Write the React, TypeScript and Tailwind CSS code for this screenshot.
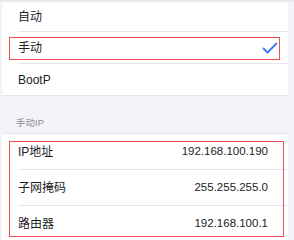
const font = "font-['Liberation_Sans','Noto_Sans_CJK_SC',sans-serif]";

const Row = ({
  label,
  value,
  h,
  line,
  check,
}: {
  label: string;
  value?: string;
  h: string;
  line?: boolean;
  check?: boolean;
}) => (
  <div className={`flex flex-col ${h}`}>
    <div className="flex flex-1 items-center justify-between pl-[16px] pr-[20px]">
      <span className="text-[12px] text-[#1c1c1e]">{label}</span>
      {value && <span className="text-[11.5px] text-[#1c1c1e]">{value}</span>}
      {check && (
        <svg width="16" height="12" viewBox="0 0 16 12" className="mr-[-10px]">
          <path
            d="M1.5 6.5 L5.5 10.5 L14.5 1.5"
            fill="none"
            stroke="#3a7af5"
            strokeWidth="1.8"
            strokeLinecap="round"
            strokeLinejoin="round"
          />
        </svg>
      )}
    </div>
    {line && <div className="ml-[16px] h-px bg-[#e6e6ea]" />}
  </div>
);

export default function App() {
  return (
    <div className={`relative h-[240px] w-[294px] overflow-hidden bg-[#f4f4f8] ${font}`}>
      <div className="h-[2px] bg-[#e9e9ee]" />
      <div className="mx-[2px] w-[286px] bg-white">
        <Row label="自动" h="h-[30px]" line />
        <Row label="手动" h="h-[32px]" line check />
        <Row label="BootP" h="h-[31px]" />
      </div>
      <div className="ml-[2px] h-px w-[286px] bg-[#e6e6ea]" />
      <div className="flex h-[37px] items-end pb-[3px] pl-[16px] text-[9.5px] text-[#8e8e93]">
        手动IP
      </div>
      <div className="ml-[2px] h-px w-[286px] bg-[#e6e6ea]" />
      <div className="mx-[2px] w-[286px] bg-white">
        <Row label="IP地址" value="192.168.100.190" h="h-[36px]" line />
        <Row label="子网掩码" value="255.255.255.0" h="h-[36px]" line />
        <Row label="路由器" value="192.168.100.1" h="h-[36px]" />
      </div>
      <div className="absolute left-[9px] top-[37px] h-[23px] w-[271px] border-[1.5px] border-[#ec4f52]" />
      <div className="absolute left-[9px] top-[141px] h-[96px] w-[275px] border-[1.5px] border-[#ec4f52]" />
    </div>
  );
}
